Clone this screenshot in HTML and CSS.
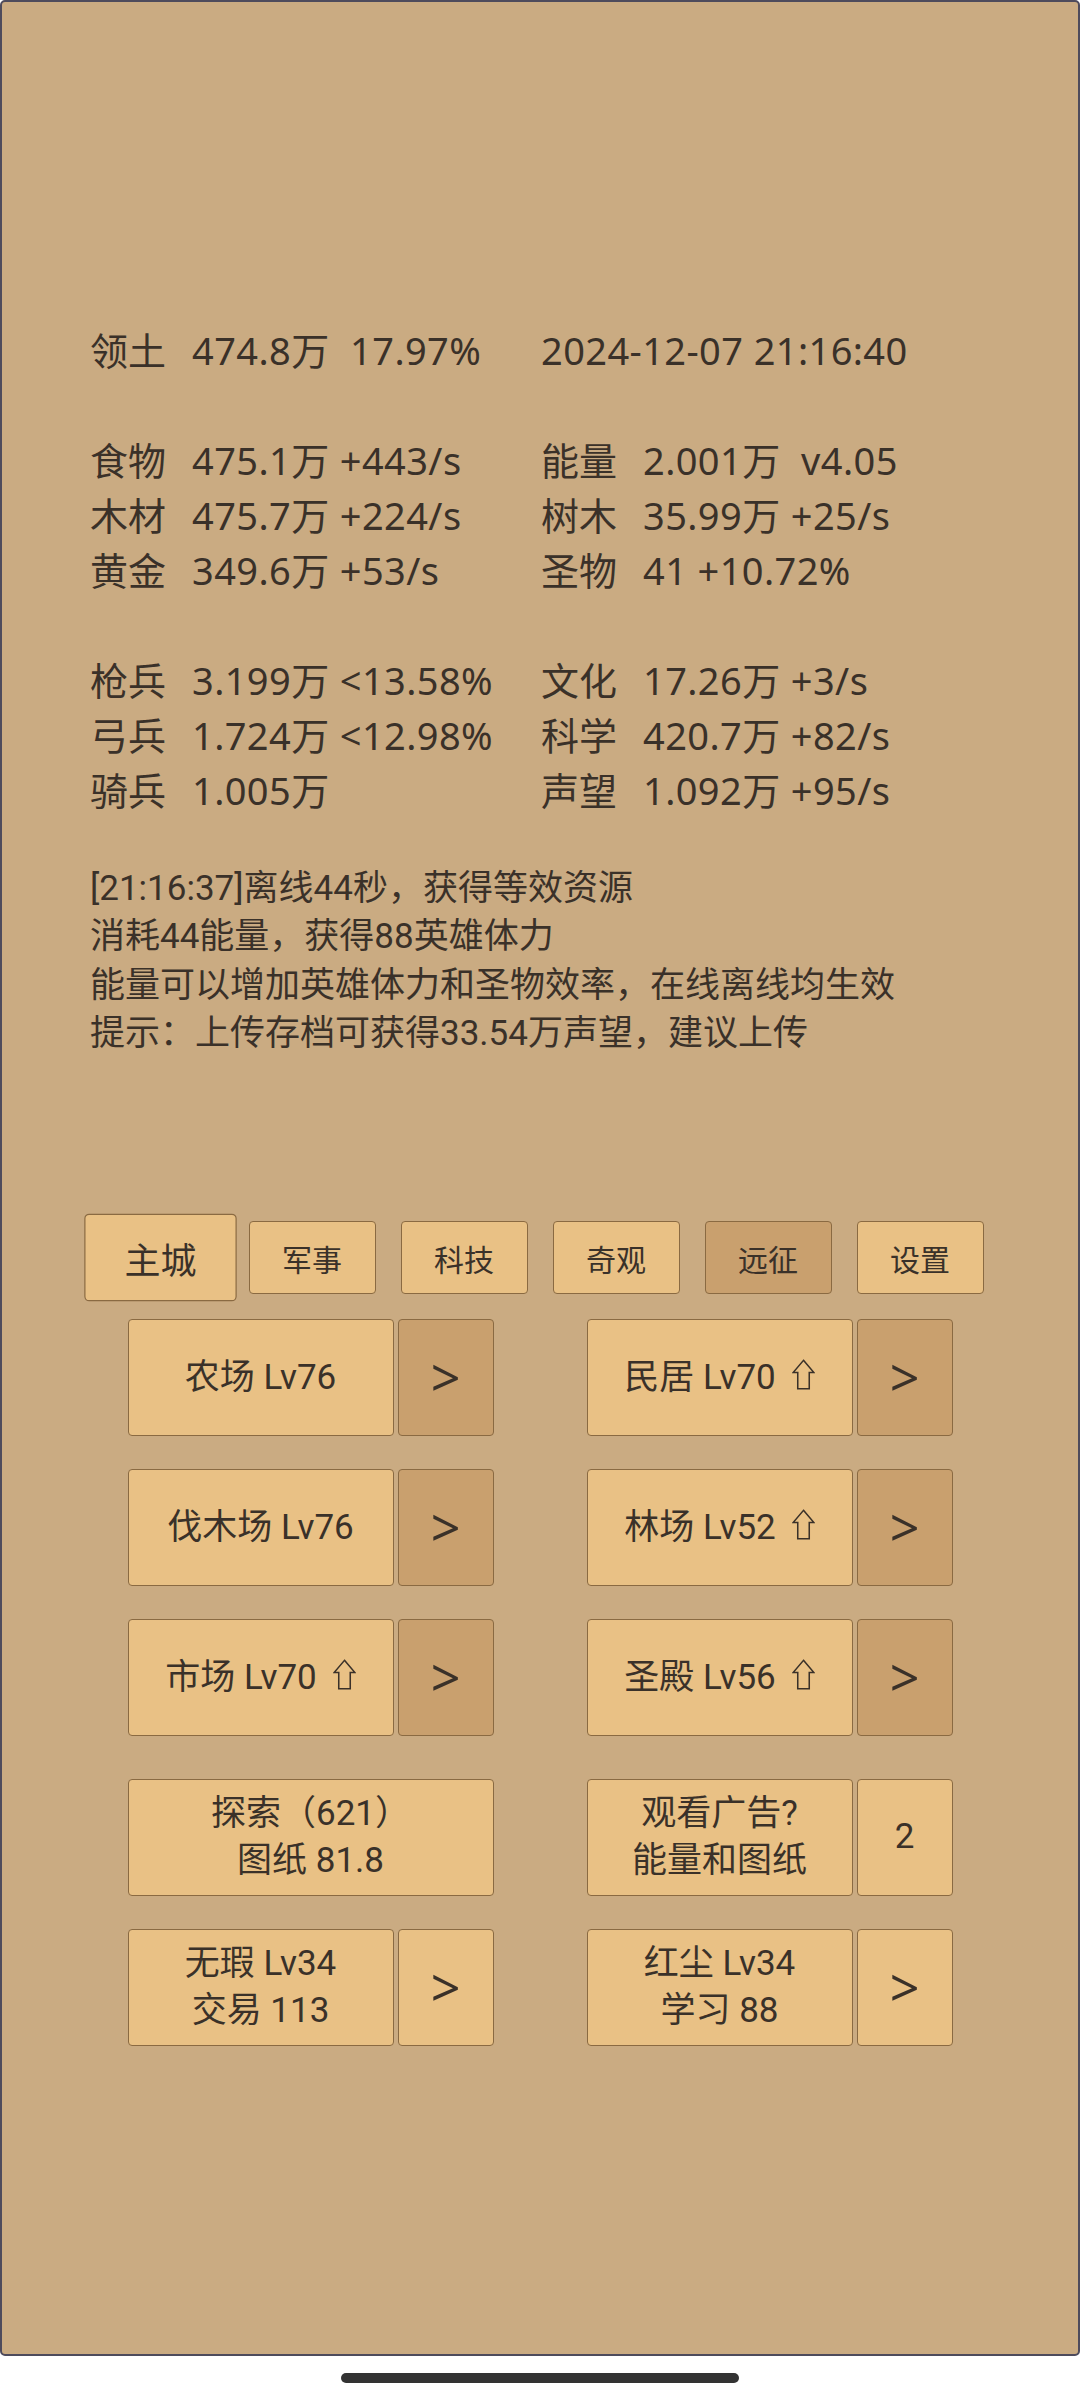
FILE: index.html
```html
<!DOCTYPE html>
<html lang="zh-CN">
<head>
<meta charset="utf-8">
<title>Game</title>
<link rel="stylesheet" href="styles.css">
</head>
<body>
<div class="screen">
  <section class="stats">
    <div class="group">
      <div class="cell"><span class="k">领土</span><span class="v">474.8万  17.97%</span></div>
      <div class="cell"><span class="v">2024-12-07 21:16:40</span></div>
    </div>
    <div class="group">
      <div class="cell"><span class="k">食物</span><span class="v">475.1万 +443/s</span></div>
      <div class="cell"><span class="k">能量</span><span class="v">2.001万  v4.05</span></div>
      <div class="cell"><span class="k">木材</span><span class="v">475.7万 +224/s</span></div>
      <div class="cell"><span class="k">树木</span><span class="v">35.99万 +25/s</span></div>
      <div class="cell"><span class="k">黄金</span><span class="v">349.6万 +53/s</span></div>
      <div class="cell"><span class="k">圣物</span><span class="v">41 +10.72%</span></div>
    </div>
    <div class="group">
      <div class="cell"><span class="k">枪兵</span><span class="v">3.199万 &lt;13.58%</span></div>
      <div class="cell"><span class="k">文化</span><span class="v">17.26万 +3/s</span></div>
      <div class="cell"><span class="k">弓兵</span><span class="v">1.724万 &lt;12.98%</span></div>
      <div class="cell"><span class="k">科学</span><span class="v">420.7万 +82/s</span></div>
      <div class="cell"><span class="k">骑兵</span><span class="v">1.005万</span></div>
      <div class="cell"><span class="k">声望</span><span class="v">1.092万 +95/s</span></div>
    </div>
  </section>

  <section class="log">
    <p>[21:16:37]离线44秒，获得等效资源</p>
    <p>消耗44能量，获得88英雄体力</p>
    <p>能量可以增加英雄体力和圣物效率，在线离线均生效</p>
    <p>提示：上传存档可获得33.54万声望，建议上传</p>
  </section>

  <nav class="tabs">
    <div class="tab active">主城</div>
    <div class="tab">军事</div>
    <div class="tab">科技</div>
    <div class="tab">奇观</div>
    <div class="tab dark">远征</div>
    <div class="tab">设置</div>
  </nav>

  <section class="grid">
    <div class="row">
      <div class="pair">
        <div class="btn main">农场 Lv76</div>
        <div class="btn side dark arrow">&gt;</div>
      </div>
      <div class="pair">
        <div class="btn main">民居 Lv70<svg class="up" viewBox="0 0 24 32" width="23" height="31"><path d="M12 1.2 L22.8 14 L18 14 L18 30.8 L6 30.8 L6 14 L1.2 14 Z"/></svg></div>
        <div class="btn side dark arrow">&gt;</div>
      </div>
    </div>
    <div class="row">
      <div class="pair">
        <div class="btn main">伐木场 Lv76</div>
        <div class="btn side dark arrow">&gt;</div>
      </div>
      <div class="pair">
        <div class="btn main">林场 Lv52<svg class="up" viewBox="0 0 24 32" width="23" height="31"><path d="M12 1.2 L22.8 14 L18 14 L18 30.8 L6 30.8 L6 14 L1.2 14 Z"/></svg></div>
        <div class="btn side dark arrow">&gt;</div>
      </div>
    </div>
    <div class="row">
      <div class="pair">
        <div class="btn main">市场 Lv70<svg class="up" viewBox="0 0 24 32" width="23" height="31"><path d="M12 1.2 L22.8 14 L18 14 L18 30.8 L6 30.8 L6 14 L1.2 14 Z"/></svg></div>
        <div class="btn side dark arrow">&gt;</div>
      </div>
      <div class="pair">
        <div class="btn main">圣殿 Lv56<svg class="up" viewBox="0 0 24 32" width="23" height="31"><path d="M12 1.2 L22.8 14 L18 14 L18 30.8 L6 30.8 L6 14 L1.2 14 Z"/></svg></div>
        <div class="btn side dark arrow">&gt;</div>
      </div>
    </div>
    <div class="row extra">
      <div class="pair">
        <div class="btn wide two"><span>探索（621）</span><span>图纸 81.8</span></div>
      </div>
      <div class="pair">
        <div class="btn main two"><span>观看广告?</span><span>能量和图纸</span></div>
        <div class="btn side">2</div>
      </div>
    </div>
    <div class="row">
      <div class="pair">
        <div class="btn main two"><span>无瑕 Lv34</span><span>交易 113</span></div>
        <div class="btn side arrow">&gt;</div>
      </div>
      <div class="pair">
        <div class="btn main two"><span>红尘 Lv34</span><span>学习 88</span></div>
        <div class="btn side arrow">&gt;</div>
      </div>
    </div>
  </section>
</div>
<div class="home-bar"></div>
</body>
</html>
```

FILE: styles.css
```css
* { box-sizing: border-box; }

html, body {
  margin: 0;
  padding: 0;
  background: #ffffff;
}

body {
  width: 1080px;
  font-family: Roboto, "Noto Sans CJK SC", sans-serif;
  color: #3a3129;
}

.screen {
  width: 1080px;
  height: 2356px;
  background: #caab82;
  border: 2px solid #4e4b5c;
  border-radius: 5px;
  padding: 321px 0 0 88px;
}

.stats {
  font-family: "Noto Sans", "Noto Sans CJK SC", sans-serif;
  font-size: 38px;
  line-height: 55px;
}

.group {
  display: grid;
  grid-template-columns: 451px auto;
  margin-bottom: 55px;
}

.group:last-child { margin-bottom: 0; }

.cell { white-space: pre; }

.k { margin-right: 26px; }

.v { letter-spacing: 0.4px; }

.log {
  margin-top: 47px;
  font-size: 35px;
  line-height: 48.3px;
}

.log p { margin: 0; white-space: pre; }

.tabs {
  margin: 163px 0 0 -88px;
  display: flex;
  justify-content: center;
  gap: 25px;
}

.tab {
  width: 127px;
  height: 73px;
  display: flex;
  align-items: center;
  justify-content: center;
  font-size: 30px;
  background: #e9c185;
  border: 1px solid #8a6a42;
  border-radius: 4px;
}

.tab.dark { background: #c9a06e; }

.tab.active { transform: scale(1.2); }

.grid {
  margin: 25px 0 0 -88px;
  display: flex;
  flex-direction: column;
  gap: 33px;
}

.row {
  display: flex;
  justify-content: center;
  gap: 93px;
}

.row.extra { margin-top: 10px; }

.pair {
  width: 366px;
  display: flex;
  gap: 4px;
}

.btn {
  height: 117px;
  display: flex;
  flex-direction: column;
  align-items: center;
  justify-content: center;
  background: #e9c185;
  border: 1px solid #8a6a42;
  border-radius: 4px;
  font-size: 35px;
  line-height: 46.7px;
  white-space: pre;
}

.btn.main { display: block; width: 266px; text-align: center; line-height: 115px; }
.btn.main.two { display: flex; line-height: 46.7px; }
.btn.side { width: 96px; }
.btn.wide { width: 366px; }
.btn.dark { background: #c9a06e; }

.arrow {
  font-family: "Noto Sans", sans-serif;
  font-size: 52px;
}

.up {
  width: 23px;
  height: 31px;
  margin-left: 16px;
  vertical-align: -1px;
  fill: none;
  stroke: #3a3129;
  stroke-width: 1.6;
  stroke-linejoin: miter;
}

.home-bar {
  width: 398px;
  height: 10px;
  margin: 17px auto 0;
  background: #333333;
  border-radius: 5px;
}
```
